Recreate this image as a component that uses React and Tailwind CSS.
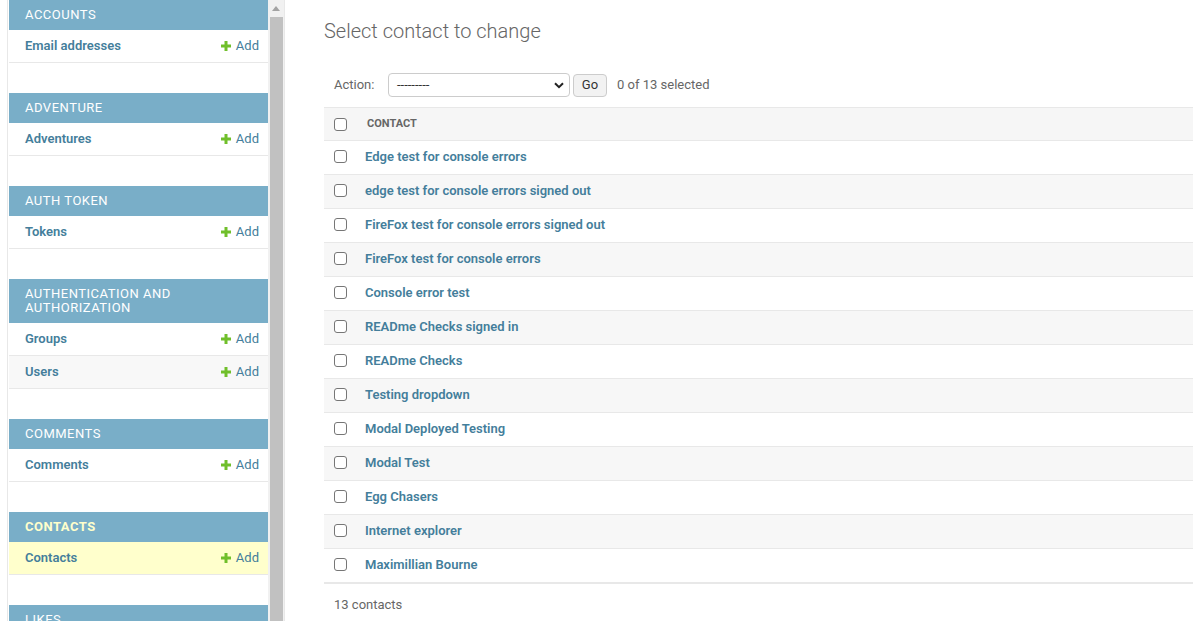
import React from "react";

const modules = [
  { name: "Accounts", models: ["Email addresses"] },
  { name: "Adventure", models: ["Adventures"] },
  { name: "Auth Token", models: ["Tokens"] },
  { name: "Authentication and Authorization", models: ["Groups", "Users"] },
  { name: "Comments", models: ["Comments"] },
  { name: "Contacts", models: ["Contacts"], current: true },
  { name: "Likes", models: [] },
];

const contacts = [
  "Edge test for console errors",
  "edge test for console errors signed out",
  "FireFox test for console errors signed out",
  "FireFox test for console errors",
  "Console error test",
  "READme Checks signed in",
  "READme Checks",
  "Testing dropdown",
  "Modal Deployed Testing",
  "Modal Test",
  "Egg Chasers",
  "Internet explorer",
  "Maximillian Bourne",
];

function Plus() {
  return (
    <svg width="10" height="10" viewBox="0 0 10 10" className="shrink-0">
      <rect x="3.5" y="0" width="3" height="10" fill="#70bf2b" />
      <rect x="0" y="3.5" width="10" height="3" fill="#70bf2b" />
    </svg>
  );
}

function Checkbox() {
  return (
    <span className="block w-[13px] h-[13px] border border-[#767676] rounded-[3px] bg-white" />
  );
}

export default function App() {
  return (
    <div className="flex h-[621px] w-[1193px] overflow-hidden bg-white font-['Roboto','Noto_Sans',sans-serif] text-[13px] text-[#333]">
      {/* left gutter */}
      <div className="w-[8px] shrink-0 border-r border-[#e8e8e8]" />
      {/* sidebar */}
      <nav className="w-[260px] shrink-0 pl-px overflow-hidden">
        {modules.map((m) => (
          <div key={m.name} className="mb-[30px]">
            <div
              className={
                "bg-[#79aec8] pl-[16px] pr-[8px] py-[8px] leading-[14px] uppercase tracking-[0.5px] " +
                (m.current ? "text-[#ffffcc] font-bold" : "text-white font-normal")
              }
            >
              {m.name}
            </div>
            {m.models.map((mod, i) => (
              <div
                key={mod}
                className={
                  "flex items-center justify-between h-[33px] border-b border-[#e8e8e8] pl-[16px] pr-[9px] " +
                  (m.current ? "bg-[#ffffcc]" : i % 2 === 1 ? "bg-[#f8f8f8]" : "bg-white")
                }
              >
                <span className="font-semibold text-[#447e9b] leading-[16px]">{mod}</span>
                <span className="flex items-center gap-[5px] text-[#447e9b] leading-[16px]">
                  <Plus />
                  Add
                </span>
              </div>
            ))}
          </div>
        ))}
      </nav>
      {/* scrollbar */}
      <div className="w-[16px] shrink-0 bg-[#f1f1f1] flex flex-col items-center">
        <div className="h-[17px] flex items-center justify-center">
          <svg width="8" height="5" viewBox="0 0 8 5">
            <polygon points="4,0 8,5 0,5" fill="#a3a3a3" />
          </svg>
        </div>
        <div className="w-[13px] flex-1 bg-[#c1c1c1]" />
      </div>
      <div className="w-px shrink-0 bg-[#e8e8e8]" />
      {/* main */}
      <main className="flex-1 min-w-0 pl-[39px] pt-[17px]">
        <h1 className="text-[20px] leading-[28px] font-light text-[#666] mb-[18px]">
          Select contact to change
        </h1>
        <div className="flex items-center h-[44px] pl-[10px] text-[#666]">
          <span className="w-[54px]">Action:</span>
          <div className="w-[182px] h-[24px] border border-[#cccccc] rounded-[4px] flex items-center justify-between pl-[8px] pr-[5px] text-[#333] bg-white">
            <span className="text-[13px]">---------</span>
            <svg width="10" height="7" viewBox="0 0 10 7">
              <path d="M1 1.2 L5 5.2 L9 1.2" stroke="#222" strokeWidth="2" fill="none" />
            </svg>
          </div>
          <div className="ml-[3px] w-[34px] h-[23px] border border-[#cccccc] rounded-[4px] bg-[#f2f2f2] flex items-center justify-center text-[#333]">
            Go
          </div>
          <span className="ml-[10px]">0 of 13 selected</span>
        </div>
        <div className="w-[900px]">
          <div className="flex items-center h-[34px] pt-[1px] bg-[#f6f6f6] border-t border-b border-[#e8e8e8]">
            <div className="w-[41px] pl-[10px] shrink-0">
              <Checkbox />
            </div>
            <span className="pl-[2px] text-[11px] font-bold text-[#666] uppercase">Contact</span>
          </div>
          {contacts.map((c, i) => (
            <div
              key={c}
              className={
                "flex items-center h-[34px] pb-[2px] border-b border-[#e8e8e8] " +
                (i % 2 === 1 ? "bg-[#f7f7f7]" : "bg-white")
              }
            >
              <div className="w-[41px] pl-[10px] shrink-0">
                <Checkbox />
              </div>
              <span className="font-semibold text-[#447e9b]">{c}</span>
            </div>
          ))}
          <div className="border-t border-[#e8e8e8] py-[10px] pl-[10px] leading-[22px] text-[#666]">
            13 contacts
          </div>
        </div>
      </main>
    </div>
  );
}
